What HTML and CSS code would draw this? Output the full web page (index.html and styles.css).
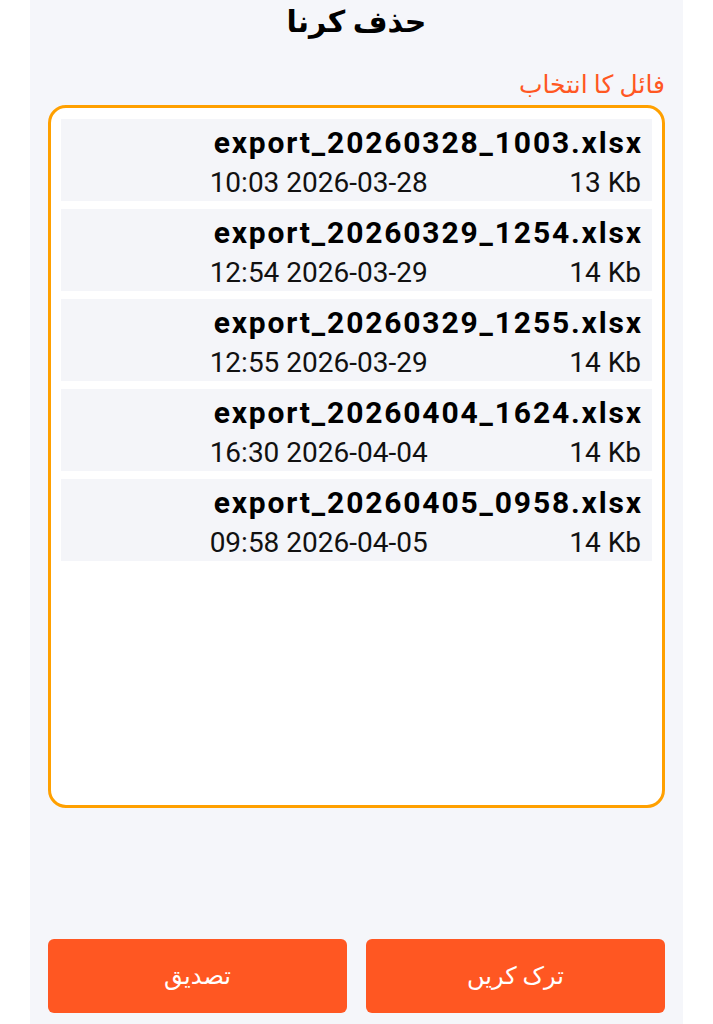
FILE: index.html
```html
<!DOCTYPE html>
<html>

<head>
    <meta charset="utf-8">
    <meta name="viewport" content="width=device-width, initial-scale=1">
    <link rel="stylesheet" href="styles.css">
</head>

<body>
    <div class="sheet">
        <h1 class="heading">حذف کرنا</h1>
        <div class="picker-label">فائل کا انتخاب</div>
        <div class="file-list">
            <div class="file-item">
                <div class="file-info">
                    <div class="file-name">export_20260328_1003.xlsx</div>
                    <div class="file-meta">
                        <span>10:03 2026-03-28</span>
                        <span>13 Kb</span>
                    </div>
                </div>
            </div>
            <div class="file-item">
                <div class="file-info">
                    <div class="file-name">export_20260329_1254.xlsx</div>
                    <div class="file-meta">
                        <span>12:54 2026-03-29</span>
                        <span>14 Kb</span>
                    </div>
                </div>
            </div>
            <div class="file-item">
                <div class="file-info">
                    <div class="file-name">export_20260329_1255.xlsx</div>
                    <div class="file-meta">
                        <span>12:55 2026-03-29</span>
                        <span>14 Kb</span>
                    </div>
                </div>
            </div>
            <div class="file-item">
                <div class="file-info">
                    <div class="file-name">export_20260404_1624.xlsx</div>
                    <div class="file-meta">
                        <span>16:30 2026-04-04</span>
                        <span>14 Kb</span>
                    </div>
                </div>
            </div>
            <div class="file-item">
                <div class="file-info">
                    <div class="file-name">export_20260405_0958.xlsx</div>
                    <div class="file-meta">
                        <span>09:58 2026-04-05</span>
                        <span>14 Kb</span>
                    </div>
                </div>
            </div>
        </div>
        <div class="actions">
            <div class="btn">تصدیق</div>
            <div class="btn">ترک کریں</div>
        </div>
    </div>
</body>

</html>
```

FILE: styles.css
```css
body {
    margin: 0;
    background-color: #FFF;
    font-family: Roboto, "Noto Sans", "DejaVu Sans", sans-serif;
}

.sheet {
    width: 653px;
    height: 1024px;
    margin: 0 auto;
    padding: 0 18px 11px 18px;
    box-sizing: border-box;
    background-color: #F5F6FA;
    display: flex;
    flex-direction: column;
}

.heading {
    margin: 0;
    font-size: 30px;
    line-height: 44px;
    font-weight: bold;
    text-align: center;
    color: #000;
}

.picker-label {
    margin-top: 26px;
    font-size: 25px;
    line-height: 30px;
    color: #FF5722;
    text-align: right;
    direction: rtl;
}

.file-list {
    margin-top: 5px;
    height: 703px;
    box-sizing: border-box;
    border: 3px solid #FFA000;
    border-radius: 18px;
    background-color: #FFF;
    padding: 11px 10px;
    display: flex;
    flex-direction: column;
    gap: 8px;
}

.file-item {
    height: 82px;
    box-sizing: border-box;
    padding: 7px 11px 0 11px;
    background-color: #F4F5F9;
    display: flex;
    justify-content: flex-end;
}

.file-info {
    display: flex;
    flex-direction: column;
}

.file-name {
    font-size: 30px;
    font-weight: bold;
    letter-spacing: 1.85px;
    margin-right: -1.85px;
    line-height: 34px;
    color: #000;
}

.file-meta {
    margin-top: 8px;
    margin-left: -4px;
    display: flex;
    justify-content: space-between;
    font-size: 28px;
    line-height: 30px;
    color: #111;
}

.actions {
    margin-top: auto;
    display: flex;
    gap: 19px;
}

.btn {
    flex: 1;
    height: 74px;
    border-radius: 6px;
    background-color: #FF5722;
    color: #FFF;
    font-size: 24px;
    display: flex;
    align-items: center;
    justify-content: center;
}
```
